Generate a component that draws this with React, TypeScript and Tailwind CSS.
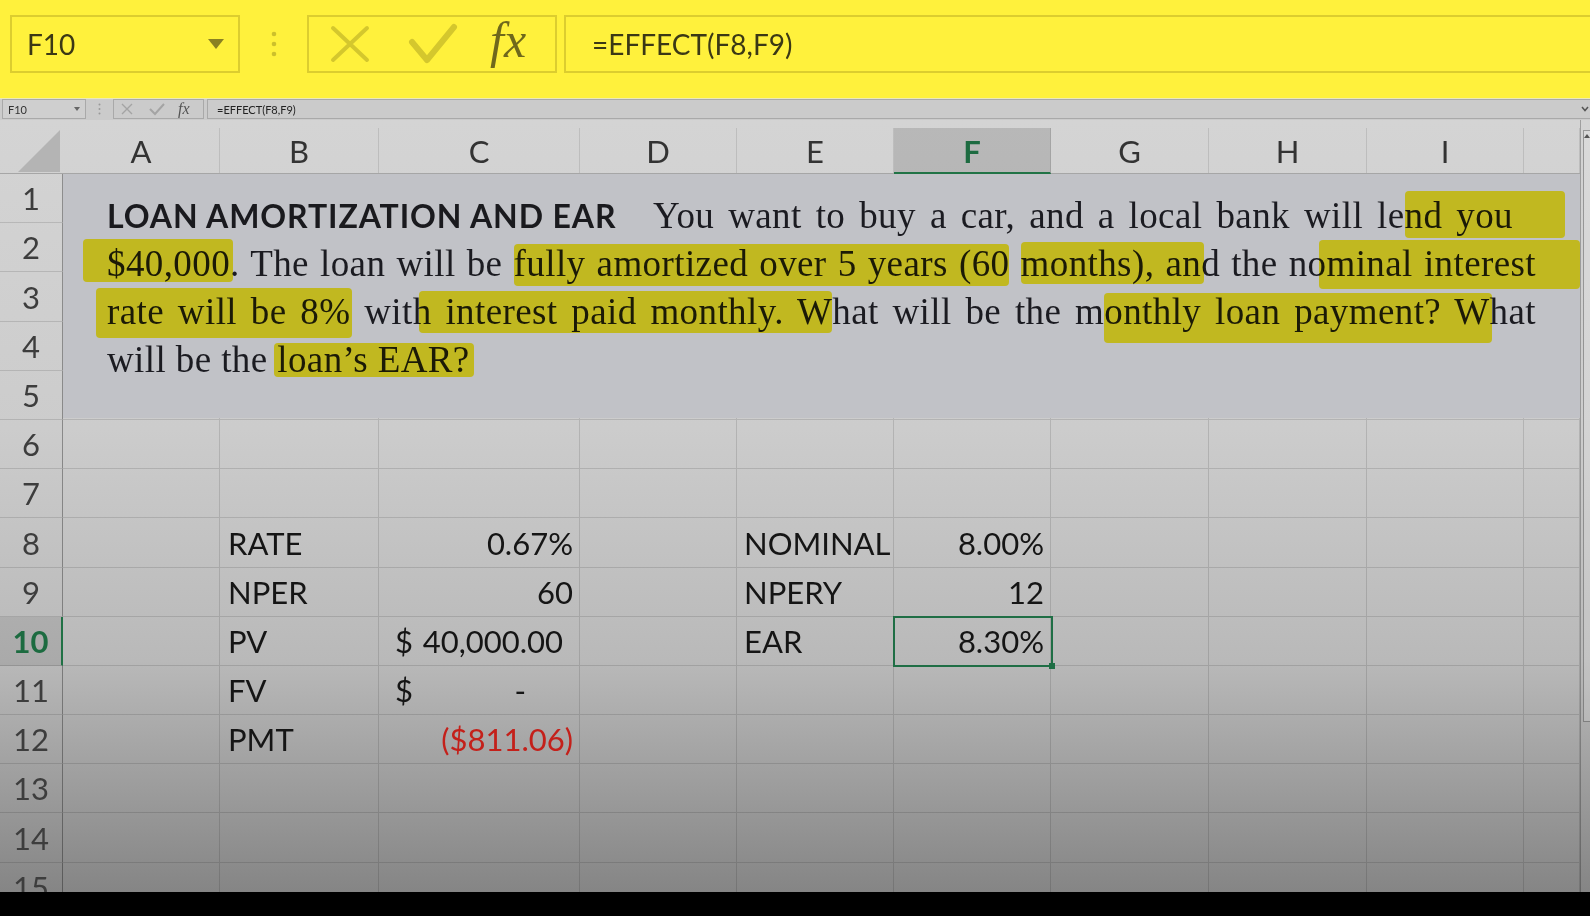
import React from 'react';

const GRID_COLS =
  'grid grid-cols-[63px_157px_159px_201px_157px_157px_157px_158px_158px_157px_56px]';

function HL({ children, c }: { children: React.ReactNode; c: string }) {
  return (
    <span className="relative">
      <span aria-hidden className={`absolute rounded-[4px] bg-[#fff229] mix-blend-multiply ${c}`} />
      {children}
    </span>
  );
}

function Banner() {
  return (
    <div className="h-[98px] shrink-0 bg-[#fff13c] flex items-start pt-[15px] pl-[10px]">
      <div className="w-[230px] h-[58px] shrink-0 border-2 border-[#dccd2f] flex items-center justify-between pl-[15px] pr-[14px]">
        <span className="text-[28px] leading-none text-[#3b3815]">F10</span>
        <svg width="16" height="10" viewBox="0 0 16 10">
          <path d="M0 0 H16 L8 10 Z" fill="#8a8122" />
        </svg>
      </div>
      <div className="w-[67px] h-[58px] shrink-0 flex items-center justify-center">
        <svg width="6" height="26" viewBox="0 0 6 26">
          <circle cx="3" cy="3" r="2.3" fill="#cdc02c" />
          <circle cx="3" cy="13" r="2.3" fill="#cdc02c" />
          <circle cx="3" cy="23" r="2.3" fill="#cdc02c" />
        </svg>
      </div>
      <div className="w-[250px] h-[58px] shrink-0 border-2 border-[#dccd2f] flex items-center">
        <svg className="ml-[21px] shrink-0" width="40" height="38" viewBox="0 0 40 38">
          <path d="M3 3 L37 35 M37 3 L3 35" stroke="#d4c72d" strokeWidth="4" strokeLinecap="round" />
        </svg>
        <svg className="ml-[38px] shrink-0" width="50" height="42" viewBox="0 0 50 42">
          <path d="M4 19 L19 37 L46 4" stroke="#d4c72d" strokeWidth="6" strokeLinecap="round" strokeLinejoin="round" fill="none" />
        </svg>
        <span className="ml-[32px] [font-family:Liberation_Serif,serif] italic text-[50px] leading-none text-[#6f681c] -mt-[8px]">
          fx
        </span>
      </div>
      <div className="ml-[7px] w-[1100px] h-[58px] shrink-0 border-2 border-[#dccd2f] flex items-center pl-[26px]">
        <span className="text-[28px] leading-none text-[#3b3815]">=EFFECT(F8,F9)</span>
      </div>
    </div>
  );
}

function SmallBar() {
  return (
    <div className="h-[22px] shrink-0 bg-[#cbcbcb] border-t border-[#ece8b8] flex items-start pl-[2px]">
      <div className="w-[84px] h-[20px] shrink-0 border border-[#a9a9a9] bg-[#cfcfcf] flex items-center justify-between pl-[5px] pr-[5px]">
        <span className="text-[11px] leading-none text-[#333]">F10</span>
        <svg width="6" height="4" viewBox="0 0 6 4">
          <path d="M0 0 H6 L3 4 Z" fill="#666" />
        </svg>
      </div>
      <div className="w-[27px] h-[20px] shrink-0 flex items-center justify-center">
        <svg width="3" height="12" viewBox="0 0 3 12">
          <circle cx="1.5" cy="1.5" r="1" fill="#999" />
          <circle cx="1.5" cy="6" r="1" fill="#999" />
          <circle cx="1.5" cy="10.5" r="1" fill="#999" />
        </svg>
      </div>
      <div className="w-[91px] h-[20px] shrink-0 border border-[#a9a9a9] flex items-center">
        <svg className="ml-[6px] shrink-0" width="14" height="14" viewBox="0 0 14 14">
          <path d="M2 2 L12 12 M12 2 L2 12" stroke="#a4a4a4" strokeWidth="1.4" />
        </svg>
        <svg className="ml-[15px] shrink-0" width="16" height="14" viewBox="0 0 16 14">
          <path d="M1 7 L6 12 L15 2" stroke="#a4a4a4" strokeWidth="2" fill="none" />
        </svg>
        <span className="ml-[13px] [font-family:Liberation_Serif,serif] italic text-[16px] leading-none text-[#555]">
          fx
        </span>
      </div>
      <div className="ml-[3px] w-[1383px] h-[20px] shrink-0 border border-r-0 border-[#a9a9a9] flex items-center justify-between pl-[9px] pr-[1px]">
        <span className="text-[11px] leading-none text-[#222]">=EFFECT(F8,F9)</span>
        <svg width="8" height="6" viewBox="0 0 8 6">
          <path d="M1 1 L4 4.5 L7 1" stroke="#555" strokeWidth="1.5" fill="none" />
        </svg>
      </div>
    </div>
  );
}

const LETTERS = ['A', 'B', 'C', 'D', 'E', 'F', 'G', 'H', 'I', ''];

function Header() {
  return (
    <div className={`${GRID_COLS} h-[54px] shrink-0`}>
      <div className="h-full border-b border-[#a6a6a6] flex items-end justify-end pr-[3px] pb-[1px]">
        <svg width="42" height="42" viewBox="0 0 42 42">
          <path d="M42 0 L42 42 L0 42 Z" fill="#b4b4b4" />
        </svg>
      </div>
      {LETTERS.map((l, i) => (
        <div key={i} className="h-full pt-[8px] border-b border-[#a6a6a6] flex flex-col">
          {l === 'F' ? (
            <div className="grow border-r border-[rgba(0,0,0,0.1)] border-b-2 border-b-[#217346] -mb-[1px] bg-[rgba(0,0,0,0.13)] flex items-end justify-center pb-[5px] text-[31px] leading-[31px] font-bold text-[#1d6b41]">
              F
            </div>
          ) : (
            <div className="grow border-r border-[rgba(0,0,0,0.1)] flex items-end justify-center pb-[6px] text-[31px] leading-[31px] text-[#333]">
              {l}
            </div>
          )}
        </div>
      ))}
    </div>
  );
}

const BASE =
  'border-r border-b border-[rgba(0,0,0,0.12)] flex items-end pb-[8px] text-[31px] leading-[31px] text-[#151515] whitespace-nowrap min-w-0';

function cellFor(r: number, c: number) {
  const left = (t: string, pad: string) => (
    <div className={`${BASE} ${pad}`}>{t}</div>
  );
  const right = (t: string, extra = '') => (
    <div className={`${BASE} justify-end pr-[6px] ${extra}`}>{t}</div>
  );
  if (c === 1) {
    const m: Record<number, string> = { 8: 'RATE', 9: 'NPER', 10: 'PV', 11: 'FV', 12: 'PMT' };
    if (m[r]) return left(m[r], 'pl-[8px]');
  }
  if (c === 2) {
    if (r === 8) return right('0.67%');
    if (r === 9) return right('60');
    if (r === 10)
      return (
        <div className={`${BASE} justify-between pl-[16px] pr-[16px]`}>
          <span>$</span>
          <span>40,000.00</span>
        </div>
      );
    if (r === 11)
      return (
        <div className={`${BASE} justify-between pl-[16px] pr-[53px]`}>
          <span>$</span>
          <span>-</span>
        </div>
      );
    if (r === 12) return right('($811.06)', 'text-[#c4201a]');
  }
  if (c === 4) {
    const m: Record<number, string> = { 8: 'NOMINAL', 9: 'NPERY', 10: 'EAR' };
    if (m[r]) return left(m[r], 'pl-[7px]');
  }
  if (c === 5) {
    if (r === 8) return right('8.00%');
    if (r === 9) return right('12');
    if (r === 10) return right('8.30%');
  }
  return <div className={BASE} />;
}

function Body() {
  const rows = Array.from({ length: 15 }, (_, i) => i + 1);
  return (
    <div className="relative h-[718px] shrink-0 overflow-hidden">
      <div className={`${GRID_COLS} auto-rows-[49.2px]`}>
        {rows.map((r) => (
          <React.Fragment key={r}>
            {r === 10 ? (
              <div className="border-b border-b-[rgba(0,0,0,0.12)] border-r-2 border-r-[#207145] bg-[rgba(0,0,0,0.08)] flex items-end justify-center pb-[8px] text-[31px] leading-[31px] font-bold text-[#1c6b40]">
                10
              </div>
            ) : (
              <div className="border-r border-b border-b-[rgba(0,0,0,0.12)] border-r-[rgba(0,0,0,0.32)] flex items-end justify-center pb-[8px] text-[31px] leading-[31px] text-[#3d3d3d]">
                {r}
              </div>
            )}
            {Array.from({ length: 10 }, (_, c) => (
              <React.Fragment key={c}>{cellFor(r, c)}</React.Fragment>
            ))}
          </React.Fragment>
        ))}
      </div>

      {/* merged text box rows 1-5 */}
      <div className="absolute left-[63px] top-0 w-[1517px] h-[244px] bg-[#c1c2c7] pl-[44px] pt-[17.5px] [font-family:Liberation_Serif,serif] text-[37px] tracking-[0.4px] text-[#1b1b21]">
        <div className="flex items-baseline h-[48px] leading-[48px]">
          <span className="w-[546px] shrink-0 [font-family:Lato,sans-serif] font-bold text-[32px] tracking-[0.9px] text-[#1a1a1e]">
            LOAN AMORTIZATION AND EAR
          </span>
          <span className="w-[860px] shrink-0 text-justify [text-align-last:justify]">
            You want to buy a car, and a local bank will le
            <HL c="left-[0px] right-[-52px] top-[-4px] bottom-[-2px]">nd you</HL>
          </span>
        </div>
        <div className="w-[1429px] h-[48px] leading-[48px] text-justify [text-align-last:justify]">
          <HL c="left-[-24px] right-[-3px] top-[-4px] bottom-[2px]">$40,000</HL>. The loan will be{' '}
          <HL c="left-[0px] right-[0px] top-[1px] bottom-[-2px]">fully amortized over 5 years (60</HL>{' '}
          <HL c="left-[0px] right-[-3px] top-[-1px] bottom-[0px]">months), an</HL>d the no
          <HL c="left-[-8px] right-[-44px] top-[-3px] bottom-[-5px]">minal interest</HL>
        </div>
        <div className="w-[1429px] h-[48px] leading-[48px] text-justify [text-align-last:justify]">
          <HL c="left-[-11px] right-[-2px] top-[-3px] bottom-[-6px]">rate will be 8%</HL> wit
          <HL c="left-[6px] right-[0px] top-[0px] bottom-[-1px]">h interest paid monthly. W</HL>hat will be the m
          <HL c="left-[0px] right-[-2px] top-[2px] bottom-[-11px]">onthly loan payment? W</HL>hat
        </div>
        <div className="h-[48px] leading-[48px]">
          will be the <HL c="left-[-3px] right-[-4px] top-[4px] bottom-[3px]">loan’s EAR?</HL>
        </div>
      </div>

      {/* selected cell F10 */}
      <div className="absolute left-[893px] top-[442px] w-[160px] h-[51px] border-2 border-[#1f6e45]">
        <div className="absolute right-[-4px] bottom-[-4px] w-[6px] h-[6px] bg-[#1f6e45]" />
      </div>
    </div>
  );
}

function Scrollbar() {
  return (
    <div className="w-[10px] shrink-0 border-l border-[rgba(0,0,0,0.25)] pt-[10px] pl-[2px]">
      <div className="h-[592px] border-l border-t border-b border-[rgba(0,0,0,0.3)] bg-[rgba(255,255,255,0.15)] flex justify-center pt-[3px]">
        <svg width="6" height="4" viewBox="0 0 6 4">
          <path d="M0 4 L3 0 L6 4 Z" fill="#555" />
        </svg>
      </div>
    </div>
  );
}

function Sheet() {
  return (
    <div className="h-[772px] shrink-0 flex bg-[linear-gradient(to_bottom,#d4d4d4_0%,#cccccc_40%,#b9b9b9_70%,#858585_100%)]">
      <div className="w-[1580px] shrink-0 flex flex-col">
        <Header />
        <Body />
      </div>
      <Scrollbar />
    </div>
  );
}

export default function App() {
  return (
    <div className="w-[1590px] h-[916px] overflow-hidden bg-black flex flex-col [font-family:Lato,Noto_Sans,sans-serif]">
      <Banner />
      <SmallBar />
      <Sheet />
      <div className="h-[24px] shrink-0 bg-black" />
    </div>
  );
}
